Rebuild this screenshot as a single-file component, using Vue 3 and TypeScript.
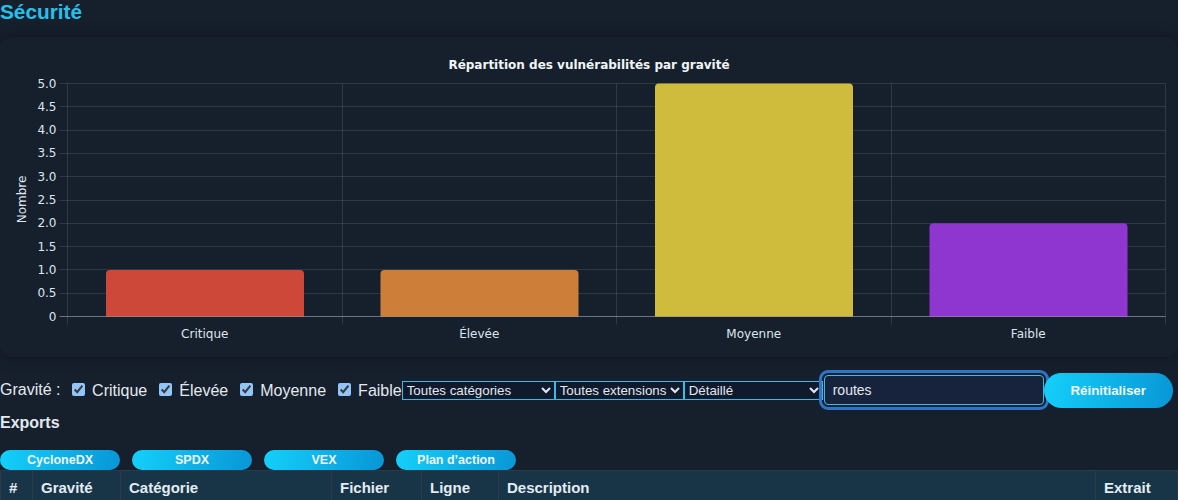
<script setup lang="ts">
const plot = { left: 67.5, right: 1165.5, top: 83.5, bottom: 316.5 }
const max = 5
const yTicks = ['0', '0.5', '1.0', '1.5', '2.0', '2.5', '3.0', '3.5', '4.0', '4.5', '5.0']
const bars = [
  { label: 'Critique', value: 1, color: '#cd4838' },
  { label: 'Élevée', value: 1, color: '#cd7f3a' },
  { label: 'Moyenne', value: 5, color: '#cfbc3c' },
  { label: 'Faible', value: 2, color: '#8e36cf' },
]
const slot = (plot.right - plot.left) / bars.length
const h = plot.bottom - plot.top
const yAt = (v: number) => plot.bottom - (v / max) * h
const xAt = (i: number) => plot.left + i * slot
const snap = (n: number) => Math.floor(n) + 0.5
const barPath = (i: number, v: number) => {
  const x = xAt(i) + 38.5
  const w = 198
  const y = yAt(v)
  const r = 4
  return `M${x} ${plot.bottom}V${y + r}Q${x} ${y} ${x + r} ${y}H${x + w - r}Q${x + w} ${y} ${x + w} ${y + r}V${plot.bottom}Z`
}
const severities = ['Critique', 'Élevée', 'Moyenne', 'Faible']
const exportsList = ['CycloneDX', 'SPDX', 'VEX', 'Plan d’action']
const columns = ['#', 'Gravité', 'Catégorie', 'Fichier', 'Ligne', 'Description', 'Extrait']
</script>

<template>
  <div class="page">
    <h2 class="title">Sécurité</h2>
    <section class="card">
      <svg class="chart" width="1178" height="320" viewBox="0 37 1178 320">
        <text class="chart-title" x="589" y="69" text-anchor="middle">Répartition des vulnérabilités par gravité</text>
        <g class="grid">
          <line v-for="(t, i) in yTicks" :key="t" :x1="plot.left - 8" :x2="plot.right" :y1="snap(yAt(i / 2))" :y2="snap(yAt(i / 2))" />
          <line v-for="i in 5" :key="i" :x1="snap(xAt(i - 1))" :x2="snap(xAt(i - 1))" :y1="plot.top" :y2="plot.bottom + 8" />
        </g>
        <path v-for="(b, i) in bars" :key="b.label" :d="barPath(i, b.value)" :fill="b.color" />
        <line class="axis" :x1="plot.left - 8" :x2="plot.right" :y1="plot.bottom" :y2="plot.bottom" />
        <text v-for="(t, i) in yTicks" :key="t" class="tick" :x="plot.left - 11" :y="yAt(i / 2) + 4" text-anchor="end">{{ t }}</text>
        <text v-for="(b, i) in bars" :key="b.label" class="tick" :x="xAt(i) + slot / 2" y="338" text-anchor="middle">{{ b.label }}</text>
        <text class="tick" transform="translate(26 199.5) rotate(-90)" text-anchor="middle">Nombre</text>
      </svg>
    </section>

    <div class="filters">
      <span class="filter-label">Gravité :</span>
      <div class="checks">
        <label v-for="s in severities" :key="s"><input type="checkbox" checked /> {{ s }}</label>
      </div>
      <select class="sel sel-cat"><option>Toutes catégories</option></select>
      <select class="sel sel-ext"><option>Toutes extensions</option></select>
      <select class="sel sel-mode"><option>Détaillé</option></select>
      <input class="search" type="text" value="routes" />
      <button class="btn reset" type="button">Réinitialiser</button>
    </div>

    <h3 class="exports-title">Exports</h3>
    <div class="exports">
      <button v-for="e in exportsList" :key="e" class="btn export" type="button">{{ e }}</button>
    </div>

    <table class="table">
      <colgroup>
        <col class="c1" /><col class="c2" /><col class="c3" /><col class="c4" />
        <col class="c5" /><col class="c6" /><col />
      </colgroup>
      <thead>
        <tr><th v-for="c in columns" :key="c">{{ c }}</th></tr>
      </thead>
    </table>
  </div>
</template>

<style>
html, body { margin: 0; background: #16202d; }
</style>

<style scoped>
.page {
  height: 500px;
  overflow: hidden;
  background: #16202d;
  color: #e2e8f0;
  font-family: "Liberation Sans", Arial, sans-serif;
  font-size: 16px;
}
.title {
  margin: 0;
  height: 37px;
  font-size: 20.8px;
  line-height: 23px;
  font-weight: 700;
  color: #27c0ec;
}
.card {
  height: 320px;
  background: #16202d;
  border-radius: 12px;
  box-shadow: 0 0 14px rgba(0, 0, 0, 0.4);
}
.chart { display: block; }
.chart-title {
  font: 700 12px "DejaVu Sans", sans-serif;
  fill: #f1f5f9;
}
.tick {
  font: 12px "DejaVu Sans", sans-serif;
  fill: #dde5ee;
}
.grid line { stroke: rgba(255, 255, 255, 0.11); stroke-width: 1; }
.axis { stroke: rgba(255, 255, 255, 0.3); stroke-width: 1; }
.filters {
  display: flex;
  align-items: center;
  height: 35px;
  margin-top: 16px;
}
.filter-label { margin-right: 7.2px; margin-bottom: 2px; }
.checks { display: flex; gap: 7.6px; margin-bottom: 2px; }
.checks input { accent-color: #93c5fd; }
.sel {
  height: 19px;
  box-sizing: border-box;
  background: #0f1b2c;
  color: #e2e8f0;
  border: 1px solid #3cbce4;
  border-radius: 0;
  font-family: "Liberation Sans", Arial, sans-serif;
  font-size: 13.33px;
  padding: 0;
}
.sel-cat { width: 153px; }
.sel-ext { width: 129px; }
.sel-mode { width: 139px; }
.search {
  box-sizing: border-box;
  width: 220px;
  height: 30px;
  margin-left: 1px;
  margin-bottom: 2px;
  padding: 0 8px;
  background: #17233c;
  color: #e2e8f0;
  border: 1px solid #3cbce4;
  border-radius: 4px;
  font: 14px "Liberation Sans", Arial, sans-serif;
  outline: 3px solid #2f74c8;
  outline-offset: 2px;
}
.btn {
  border: 0;
  color: #f1f5f9;
  font-family: "Liberation Sans", Arial, sans-serif;
  font-weight: 700;
  background: linear-gradient(100deg, #14d0fa, #0896d6);
}
.reset {
  width: 129px;
  height: 35px;
  border-radius: 18px;
  font-size: 13.33px;
}
.exports-title {
  margin: 0;
  margin-top: 6px;
  height: 36px;
  font-size: 16px;
  line-height: 18px;
  font-weight: 700;
}
.exports { display: flex; gap: 12px; }
.export {
  width: 120px;
  height: 20px;
  padding: 0;
  border-radius: 10px;
  font-size: 12.5px;
}
.table {
  width: 100%;
  table-layout: fixed;
  border-collapse: collapse;
}
.c1 { width: 32px; }
.c2 { width: 88px; }
.c3 { width: 211px; }
.c4 { width: 90px; }
.c5 { width: 77px; }
.c6 { width: 597px; }
.table th {
  height: 36px;
  padding: 0 8px 2px;
  box-sizing: border-box;
  text-align: left;
  font-size: 15px;
  font-weight: 700;
  background: #183447;
  color: #e2ecf4;
  border: 1px solid #2a3a4a;
}
</style>
